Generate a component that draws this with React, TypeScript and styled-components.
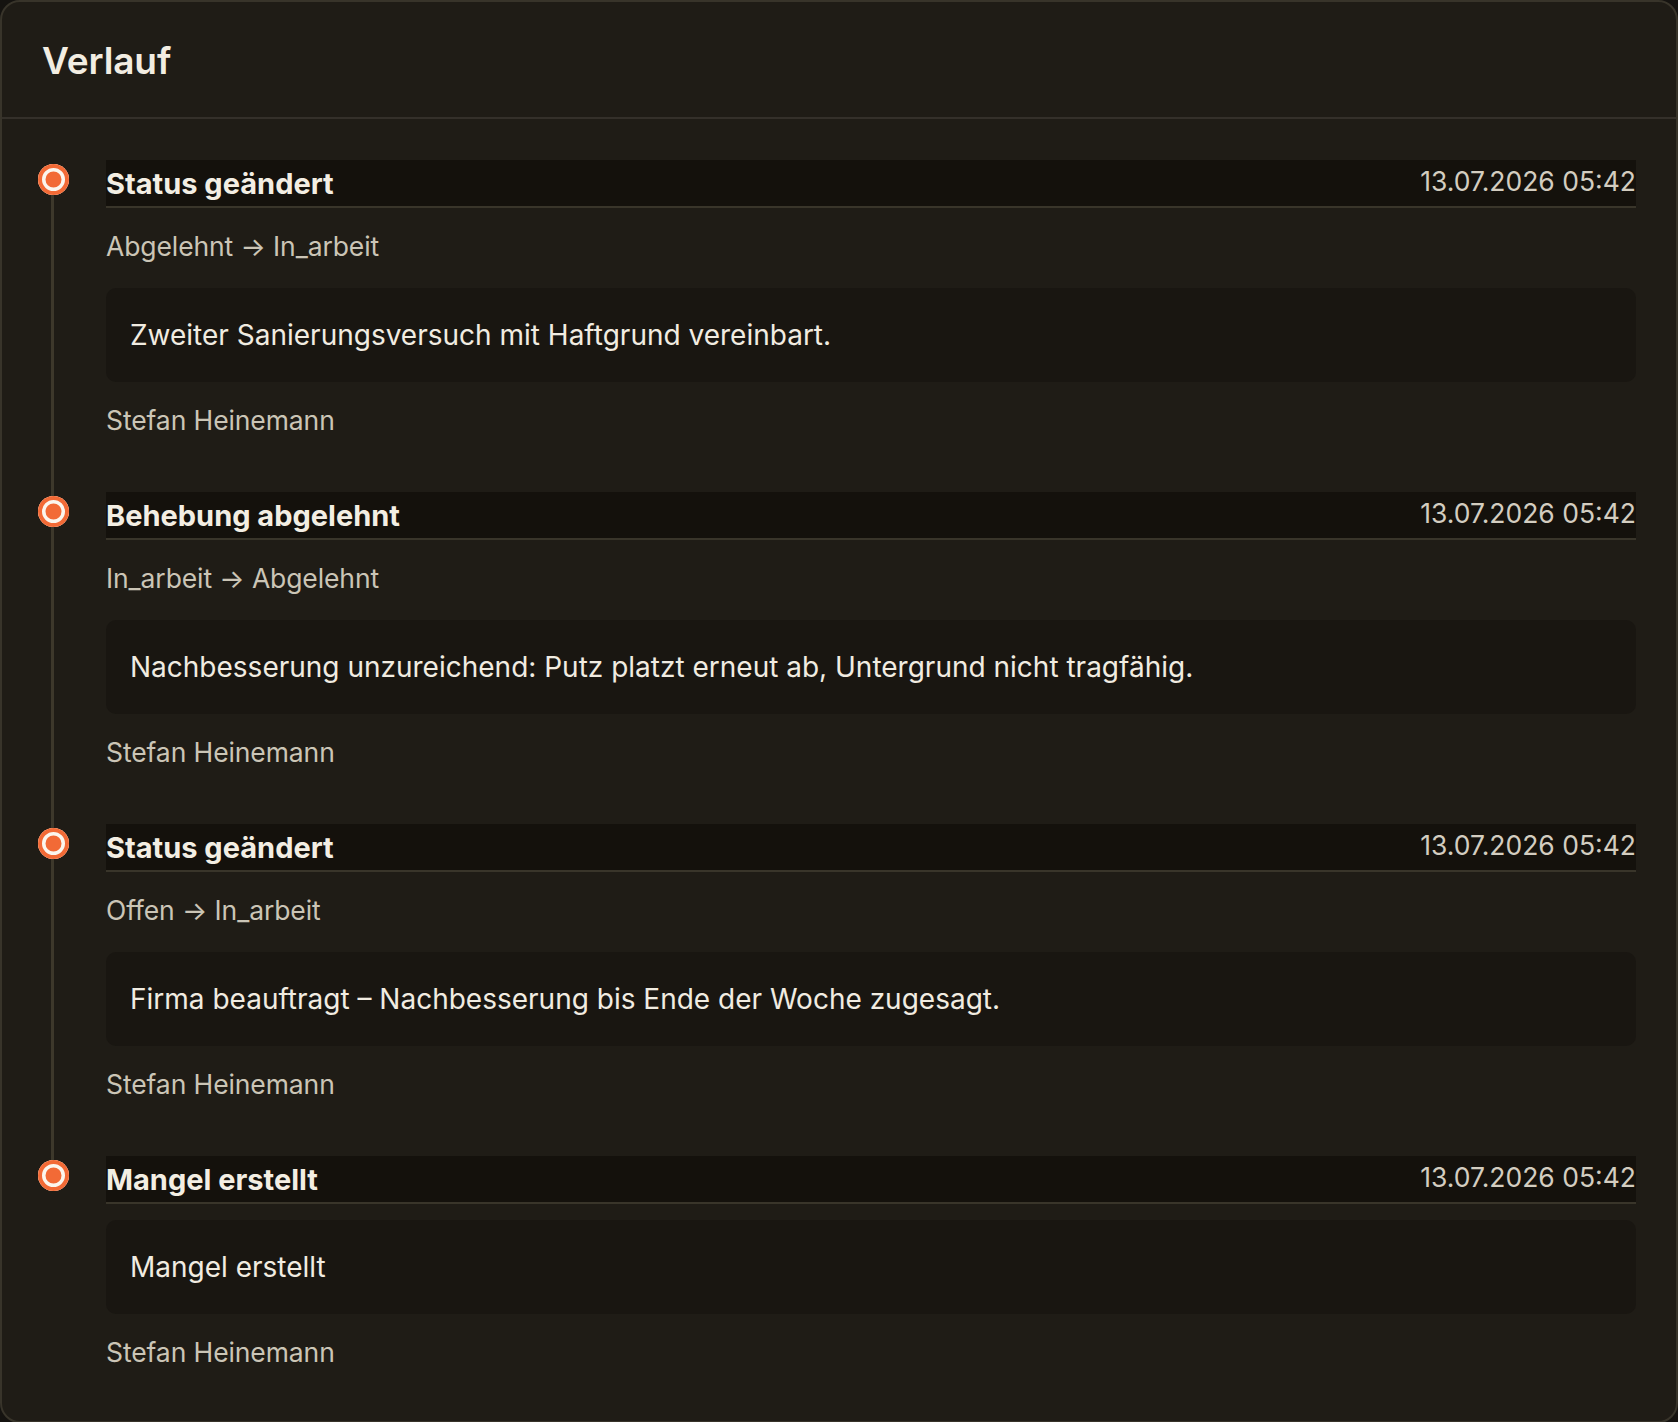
import React from "react";
import styled, { createGlobalStyle } from "styled-components";

interface Eintrag {
  id: number;
  titel: string;
  datum: string;
  von?: string;
  nach?: string;
  notiz: string;
  autor: string;
}

const eintraege: Eintrag[] = [
  {
    id: 1,
    titel: "Status geändert",
    datum: "13.07.2026 05:42",
    von: "Abgelehnt",
    nach: "In_arbeit",
    notiz: "Zweiter Sanierungsversuch mit Haftgrund vereinbart.",
    autor: "Stefan Heinemann",
  },
  {
    id: 2,
    titel: "Behebung abgelehnt",
    datum: "13.07.2026 05:42",
    von: "In_arbeit",
    nach: "Abgelehnt",
    notiz:
      "Nachbesserung unzureichend: Putz platzt erneut ab, Untergrund nicht tragfähig.",
    autor: "Stefan Heinemann",
  },
  {
    id: 3,
    titel: "Status geändert",
    datum: "13.07.2026 05:42",
    von: "Offen",
    nach: "In_arbeit",
    notiz: "Firma beauftragt – Nachbesserung bis Ende der Woche zugesagt.",
    autor: "Stefan Heinemann",
  },
  {
    id: 4,
    titel: "Mangel erstellt",
    datum: "13.07.2026 05:42",
    notiz: "Mangel erstellt",
    autor: "Stefan Heinemann",
  },
];

const App: React.FC = () => {
  return (
    <>
      <GlobalStyle />
      <Card>
        <CardHeader>
          <h2>Verlauf</h2>
        </CardHeader>
        <Timeline>
          {eintraege.map((eintrag, index) => (
            <Entry key={eintrag.id} $last={index === eintraege.length - 1}>
              <Dot />
              <EntryBody>
                <TitleBar>
                  <EntryTitle>{eintrag.titel}</EntryTitle>
                  <EntryDate>{eintrag.datum}</EntryDate>
                </TitleBar>
                {/* Statuswechsel nur wenn vorhanden */}
                {eintrag.von && eintrag.nach && (
                  <MetaLine>
                    {eintrag.von} → {eintrag.nach}
                  </MetaLine>
                )}
                <Note>{eintrag.notiz}</Note>
                <MetaLine>{eintrag.autor}</MetaLine>
              </EntryBody>
            </Entry>
          ))}
        </Timeline>
      </Card>
    </>
  );
};

export default App;

const GlobalStyle = createGlobalStyle`
  html, body {
    margin: 0;
    padding: 0;
    background: #151310;
  }
  * {
    box-sizing: border-box;
  }
  body {
    font-family: Inter, "Liberation Sans", sans-serif;
  }
`;

const Card = styled.section`
  width: 1678px;
  background: #1f1c16;
  border: 2px solid #38342a;
  border-radius: 20px;
  overflow: hidden;
`;

const CardHeader = styled.header`
  padding: 36px 40px 33px;
  border-bottom: 2px solid #34302a;
  h2 {
    margin: 0;
    color: #f2ede2;
    font-size: 37px;
    font-weight: 600;
    line-height: 46px;
    letter-spacing: -0.1px;
  }
`;

const Timeline = styled.ol`
  list-style: none;
  margin: 0;
  padding: 41px 40px 43px 36px;
  display: flex;
  flex-direction: column;
  gap: 46px;
`;

const Entry = styled.li<{ $last: boolean }>`
  position: relative;
  display: grid;
  grid-template-columns: 31px 1fr;
  column-gap: 37px;
  align-items: start;

  &::before {
    content: "";
    display: ${(p) => (p.$last ? "none" : "block")};
    position: absolute;
    left: 13px;
    width: 3px;
    top: 35px;
    bottom: -50px;
    background: #3d382b;
  }
`;

const Dot = styled.span`
  display: block;
  width: 31px;
  height: 31px;
  margin-top: 4px;
  border-radius: 50%;
  background: #f26a36;
  box-shadow: inset 0 0 0 4px #f26a36, inset 0 0 0 7.5px #fbf6ee;
`;

const EntryBody = styled.div`
  display: flex;
  flex-direction: column;
  gap: 16px;
  min-width: 0;
`;

const TitleBar = styled.div`
  display: flex;
  justify-content: space-between;
  align-items: flex-start;
  padding: 3px 0 1px;
  background: #14110c;
  border-bottom: 2px solid #39352a;
`;

const EntryTitle = styled.h3`
  margin: 0;
  color: #f3eee3;
  font-size: 29px;
  font-weight: 700;
  line-height: 42px;
`;

const EntryDate = styled.span`
  color: #d3cdc0;
  font-size: 26.5px;
  line-height: 36px;
`;

const MetaLine = styled.div`
  padding-bottom: 3px;
  color: #cbc5b6;
  font-size: 26.5px;
  line-height: 45px;
  letter-spacing: -0.1px;
`;

const Note = styled.p`
  margin: 0;
  padding: 23px 24px;
  background: #191611;
  border-radius: 10px;
  color: #f1ece1;
  font-size: 28px;
  line-height: 48px;
`;
